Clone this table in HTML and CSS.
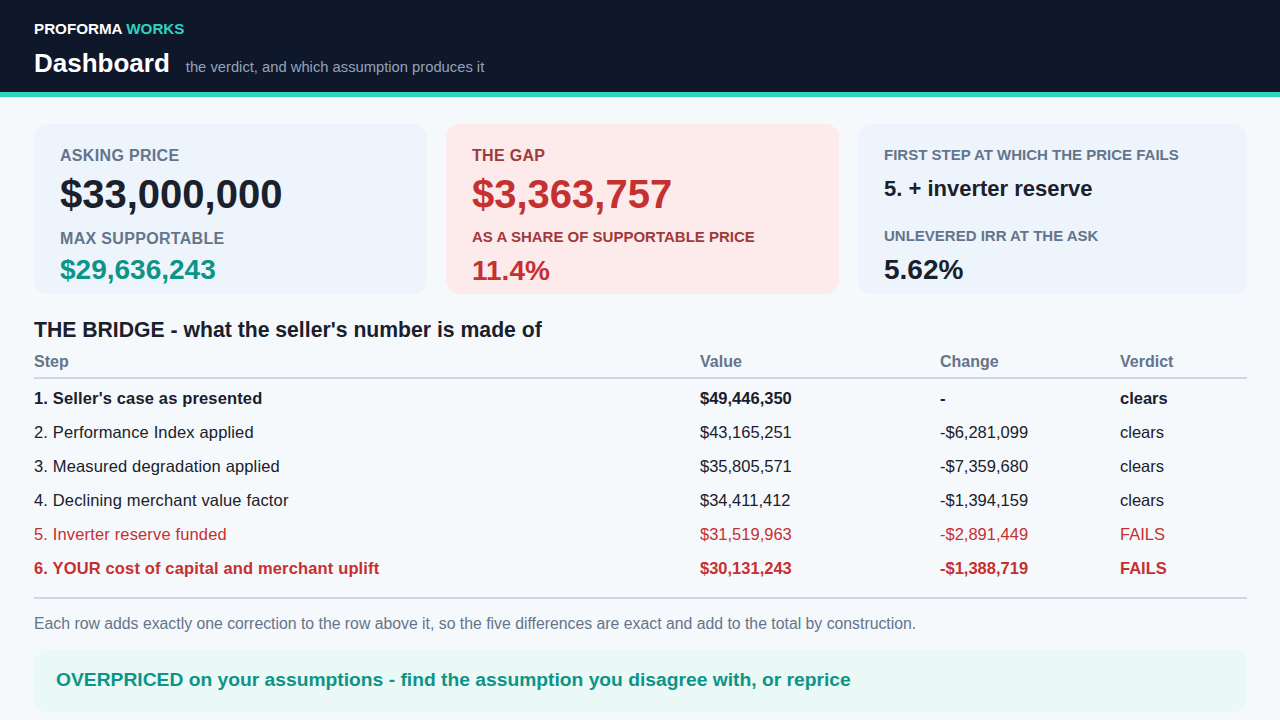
FILE: index.html
```html
<!DOCTYPE html>
<html lang="en">
<head>
<meta charset="utf-8">
<title>Proforma Works - Dashboard</title>
<link rel="stylesheet" href="styles.css">
</head>
<body>
<header class="topbar">
  <div class="brand">PROFORMA <span class="brand-accent">WORKS</span></div>
  <div class="title-row">
    <h1 class="page-title">Dashboard</h1>
    <span class="page-sub">the verdict, and which assumption produces it</span>
  </div>
</header>
<main class="content">
  <section class="cards">
    <div class="card card-blue">
      <div class="lbl lbl-main">ASKING PRICE</div>
      <div class="big">$33,000,000</div>
      <div class="lbl lbl-second">MAX SUPPORTABLE</div>
      <div class="mid teal">$29,636,243</div>
    </div>
    <div class="card card-red">
      <div class="lbl lbl-main red-lbl">THE GAP</div>
      <div class="big red">$3,363,757</div>
      <div class="lbl lbl-small lbl-second2 red-lbl">AS A SHARE OF SUPPORTABLE PRICE</div>
      <div class="mid red">11.4%</div>
    </div>
    <div class="card card-blue">
      <div class="lbl lbl-small">FIRST STEP AT WHICH THE PRICE FAILS</div>
      <div class="step-val">5. + inverter reserve</div>
      <div class="lbl lbl-small lbl-third">UNLEVERED IRR AT THE ASK</div>
      <div class="mid dark">5.62%</div>
    </div>
  </section>

  <h2 class="section-title">THE BRIDGE - what the seller's number is made of</h2>
  <table class="bridge">
    <colgroup>
      <col class="c-step">
      <col class="c-value">
      <col class="c-change">
      <col class="c-verdict">
    </colgroup>
    <thead>
      <tr><th>Step</th><th>Value</th><th>Change</th><th>Verdict</th></tr>
    </thead>
    <tbody>
      <tr class="row-bold"><td>1. Seller's case as presented</td><td>$49,446,350</td><td>-</td><td>clears</td></tr>
      <tr><td>2. Performance Index applied</td><td>$43,165,251</td><td>-$6,281,099</td><td>clears</td></tr>
      <tr><td>3. Measured degradation applied</td><td>$35,805,571</td><td>-$7,359,680</td><td>clears</td></tr>
      <tr><td>4. Declining merchant value factor</td><td>$34,411,412</td><td>-$1,394,159</td><td>clears</td></tr>
      <tr class="row-fail"><td>5. Inverter reserve funded</td><td>$31,519,963</td><td>-$2,891,449</td><td>FAILS</td></tr>
      <tr class="row-fail row-bold"><td>6. YOUR cost of capital and merchant uplift</td><td>$30,131,243</td><td>-$1,388,719</td><td>FAILS</td></tr>
    </tbody>
  </table>
  <p class="note">Each row adds exactly one correction to the row above it, so the five differences are exact and add to the total by construction.</p>
  <div class="verdict-banner"><strong>OVERPRICED</strong> on your assumptions - find the assumption you disagree with, or reprice</div>
</main>
</body>
</html>
```

FILE: styles.css
```css
* { box-sizing: border-box; }
html, body { margin: 0; padding: 0; }
body {
  background: #f5f9fc;
  font-family: "Liberation Sans", Arial, sans-serif;
  color: #1a202c;
}
.topbar {
  background: #0f172a;
  padding: 20px 34px 13px;
  border-bottom: 5px solid #2dd4bf;
}
.brand {
  font-size: 15.2px;
  line-height: 18px;
  font-weight: 700;
  color: #ffffff;
}
.brand-accent { color: #2dd4bf; }
.title-row {
  display: flex;
  align-items: baseline;
  gap: 16px;
  margin-top: 9px;
}
.page-title {
  margin: 0;
  font-size: 26px;
  line-height: 32px;
  font-weight: 700;
  color: #ffffff;
}
.page-sub {
  font-size: 14.75px;
  color: #94a3b8;
}
.content {
  padding: 27px 33px 8px 34px;
}
.cards {
  display: grid;
  grid-template-columns: 393fr 393fr 389fr;
  gap: 19px;
}
.card {
  border-radius: 14px;
  padding: 22px 26px 6px;
  display: flex;
  flex-direction: column;
}
.card-blue { background: #edf4fc; }
.card-red { background: #fdeaea; }
.lbl {
  font-weight: 700;
  color: #64748b;
  line-height: 1.2;
}
.lbl-main { font-size: 16px; letter-spacing: 0.02em; }
.lbl-second { font-size: 16px; letter-spacing: 0.02em; margin-top: 11px; }
.lbl-small { font-size: 15px; }
.lbl-second2 { margin-top: 10px; }
.lbl-third { margin-top: 25px; }
.red-lbl { color: #9f3a3a; }
.big {
  font-size: 40px;
  line-height: 48px;
  font-weight: 700;
  margin-top: 5px;
  color: #1a202c;
}
.mid {
  font-size: 28px;
  line-height: 34px;
  font-weight: 700;
  margin-top: 5px;
}
.lbl-small + .mid { margin-top: 8px; }
.step-val {
  font-size: 22px;
  line-height: 26px;
  font-weight: 700;
  margin-top: 12px;
  color: #1a202c;
}
.teal { color: #0d9488; }
.red { color: #c53030; }
.dark { color: #1a202c; }

.section-title {
  margin: 24px 0 3px;
  font-size: 21.2px;
  line-height: 24px;
  font-weight: 700;
  color: #1a202c;
}
.bridge {
  width: 100%;
  border-collapse: collapse;
  font-size: 16.5px;
}
.c-step { width: 666px; }
.c-value { width: 240px; }
.c-change { width: 180px; }
.bridge th {
  text-align: left;
  font-size: 16px;
  font-weight: 700;
  color: #64748b;
  line-height: 18px;
  padding: 8px 0 6px;
  border-bottom: 2px solid #cfd6e4;
}
.bridge td {
  line-height: 18px;
  padding: 8px 0;
  color: #1a202c;
}
.bridge td:first-child { letter-spacing: 0.15px; }
.bridge tbody tr:first-child td { padding-top: 10px; }
.row-bold td { font-weight: 700; }
.bridge .row-fail td { color: #c53030; }
.note {
  margin: 12px 0 0;
  padding-top: 16px;
  border-top: 2px solid #cfd6e4;
  font-size: 15.8px;
  line-height: 18px;
  color: #64748b;
}
.verdict-banner {
  margin-top: 17px;
  background: #eaf9f5;
  border-radius: 14px;
  padding: 18px 22px 20px;
  font-size: 19.25px;
  line-height: 24px;
  font-weight: 700;
  color: #0d9488;
}
.verdict-banner strong { font-weight: 700; }
```
